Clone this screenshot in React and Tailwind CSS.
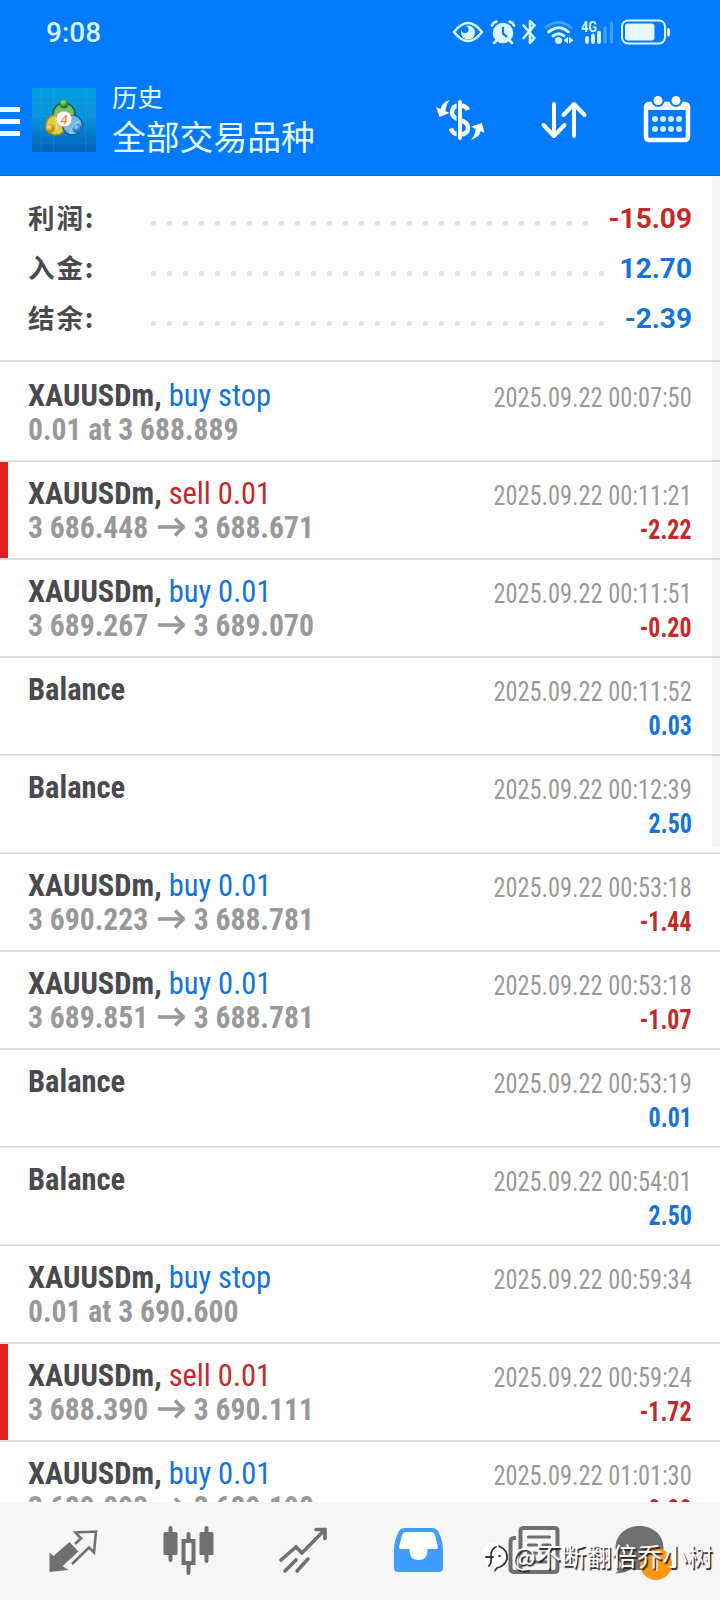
const cyan = '#d8f6ff'

function StatusBar() {
  return (
    <div className="flex h-[64px] items-center justify-between pl-[46px] pr-[50px] text-[#d8f6ff]">
      <span className="pt-[2px] font-['Roboto'] text-[28px] font-medium leading-[66px]">9:08</span>
      <svg width="220" height="28" viewBox="450 18 220 28" fill="none" stroke={cyan}>
        <path d="M454 32 Q468 14 482 32 Q468 50 454 32Z" strokeWidth="2.6" strokeLinejoin="round" />
        <circle cx="468" cy="32.500" r="7" fill={cyan} stroke="none" />
        <circle cx="465" cy="29.500" r="3.600" fill="#007aff" stroke="none" />
        <circle cx="503" cy="33" r="10.300" fill={cyan} stroke="none" />
        <path d="M503 27v6.500l4 3.500" stroke="#007aff" strokeWidth="2.200" />
        <path d="M492 25.500q1-3 4.500-4M514 25.500q-1-3-4.500-4M496 41l-2 2M510 41l2 2" strokeWidth="2.600" strokeLinecap="round" />
        <path d="M523.500 25.500l11 12.500-4.500 5V21l4.500 4.500-11 12.500" strokeWidth="2.600" strokeLinejoin="round" strokeLinecap="round" />
        <path d="M545 28q13.500-11 27 0" strokeWidth="2.800" opacity=".3" />
        <path d="M548.500 32q10.500-8.500 20 0M553 36q6-4.500 11 0" strokeWidth="3" strokeLinecap="round" />
        <circle cx="558.500" cy="40.500" r="3.500" fill={cyan} stroke="none" />
        <path d="M563.500 40.300l4.500-3.500v7zM573.500 40.300l-4.500-3.500v7z" fill={cyan} stroke="none" />
        <text x="581" y="31.500" fontSize="14.500" fontWeight="700" fontFamily="Roboto" fill={cyan} stroke="none" textLength="16" lengthAdjust="spacingAndGlyphs">4G</text>
        <path d="M587 38v4M593 35.500v6.500M599 32.500v9.500" strokeWidth="3.800" strokeLinecap="round" />
        <path d="M605 28v14M611.500 23v19" strokeWidth="3.400" strokeLinecap="round" opacity=".3" />
        <rect x="622" y="20.500" width="43" height="23" rx="6" strokeWidth="2" />
        <rect x="625" y="23.500" width="29.500" height="17" rx="3" fill="#e9f6fe" stroke="none" />
        <path d="M668.500 29.500v5.500" strokeWidth="3" strokeLinecap="round" />
      </svg>
    </div>
  )
}

function AppLogo() {
  return (
    <svg width="64" height="64" viewBox="0 0 64 64">
      <defs>
        <linearGradient id="sky" x1="0" y1="0" x2="0" y2="1">
          <stop offset="0" stopColor="#069fe0" />
          <stop offset=".5" stopColor="#088fdc" />
          <stop offset="1" stopColor="#0062b4" />
        </linearGradient>
        <radialGradient id="green" cx=".4" cy=".3"><stop stopColor="#b5dd80" /><stop offset="1" stopColor="#1e8430" /></radialGradient>
        <radialGradient id="gold" cx=".4" cy=".3"><stop stopColor="#fff27d" /><stop offset="1" stopColor="#b58b10" /></radialGradient>
        <radialGradient id="blue" cx=".4" cy=".3"><stop stopColor="#9cd6f6" /><stop offset="1" stopColor="#2070b8" /></radialGradient>
      </defs>
      <rect width="64" height="64" fill="url(#sky)" />
      <path d="M9 0v64M21.500 0v64M54 0v64M0 15h64M0 28h64M0 55h64" stroke="#5cc8ef" strokeWidth=".6" opacity=".25" />
      <circle cx="32" cy="26" r="11" fill="#78bb62" stroke="#17672c" strokeWidth="1.500" />
      <circle cx="24" cy="37" r="10" fill="#e2cc3f" stroke="#a88c18" strokeWidth="1.500" />
      <circle cx="40.500" cy="37" r="10" fill="#74b8e4" stroke="#155e9b" strokeWidth="1.500" />
      <path d="M24 29q-1 9 3 16M22.500 27q9-5 19 0M38 46q2-9 9-13" stroke="#fff" strokeWidth="1" fill="none" opacity=".5" />
      <circle cx="32" cy="16" r="4.500" fill="url(#green)" />
      <circle cx="18" cy="40.500" r="4.500" fill="url(#gold)" />
      <circle cx="45" cy="40.500" r="4.500" fill="url(#blue)" />
      <circle cx="32" cy="31" r="7.800" fill="#fff" stroke="#c2b49a" strokeWidth=".7" />
      <text x="32" y="35.500" textAnchor="middle" fontFamily="Roboto" fontStyle="italic" fontWeight="500" fontSize="13" fill="#ee8a50">4</text>
    </svg>
  )
}

function Header() {
  return (
    <header className="h-[176px] border-b border-[#1569cc] bg-[#007aff]">
      <StatusBar />
      <div className="flex items-start text-white">
        <div className="mt-[43px] flex w-5 flex-col gap-[7px]">
          <i className="h-[5px] bg-white" />
          <i className="h-[5px] bg-white" />
          <i className="h-[5px] bg-white" />
        </div>
        <div className="ml-3 mt-6">
          <AppLogo />
        </div>
        <div className="ml-4 mt-[17px] flex flex-col font-['Noto_Sans_CJK_SC',sans-serif] text-[#e8faff]">
          <span className="text-[25.500px] leading-[29px]">历史</span>
          <span className="text-[33.800px] leading-[51px]">全部交易品种</span>
        </div>
        <svg className="ml-auto mr-[28px] mt-[30px]" width="258" height="50" viewBox="434 94 258 50" fill="none" stroke="#fff">
          <path d="M468 110q-2-4.500-8-4.500-8 0-8 7 0 5 8 7.500t8 7.500q0 7-8 7-7.500 0-9-6" strokeWidth="4.500" />
          <path d="M457.300 100v39" stroke="#007aff" strokeWidth="1.400" />
          <path d="M460 102v36" strokeWidth="4" strokeLinecap="round" />
          <path d="M450 100q-8 2-9.500 9l-4.500-2 3.500 10 10-4-4-2q0-6 4.500-11zM471 140q9-3 9.500-9l4 2-2.500-10-11 3.500 4.500 2.500q0 6-4.500 11z" fill="#fff" stroke="none" />
          <path d="M554 104v31M543.500 125l10.500 11 10.500-11M574 136v-31M563.500 115l10.500-11 10.500 11" strokeWidth="4" strokeLinecap="round" strokeLinejoin="round" />
          <rect x="646" y="104" width="42" height="36" rx="3" strokeWidth="4.500" />
          <path d="M645 103h44v7h-44z" fill="#fff" stroke="none" />
          <circle cx="658" cy="100.500" r="5.500" fill="#fff" stroke="#007aff" strokeWidth="2" />
          <circle cx="676" cy="100.500" r="5.500" fill="#fff" stroke="#007aff" strokeWidth="2" />
          <path d="M655 119h.01M663 119h.01M671 119h.01M679 119h.01M655 129h.01M663 129h.01M671 129h.01M679 129h.01" stroke="#d2efff" strokeWidth="6" strokeLinecap="round" />
        </svg>
      </div>
    </header>
  )
}

const summary = [
  { label: '利润:', value: '-15.09', color: 'text-[#c62828]', dots: 28 },
  { label: '入金:', value: '12.70', color: 'text-[#1273dc]', dots: 29 },
  { label: '结余:', value: '-2.39', color: 'text-[#1273dc]', dots: 29 },
]

function Summary() {
  return (
    <section className="flex h-[186px] flex-col border-b-2 border-[#e0e0e0] px-7 pt-[17px]">
      {summary.map((s) => (
        <div key={s.label} className="flex h-[50px] items-center">
          <span className="w-[123px] pb-[2px] font-['Noto_Sans_CJK_SC',sans-serif] text-[26.500px] font-bold leading-[48px] tracking-[1.900px] text-[#4a4a4e]">
            {s.label}
          </span>
          <span className="mt-[11px] flex gap-[11px]">
            {Array.from({ length: s.dots }, (_, i) => (
              <i key={i} className="size-[5px] rounded-full bg-[#e2e2e2]" />
            ))}
          </span>
          <span className={`ml-auto pt-[2px] font-['Roboto'] text-[28px] font-bold leading-[48px] ${s.color}`}>{s.value}</span>
        </div>
      ))}
    </section>
  )
}

const history = [
  { side: 'buy stop', text: '0.01 at 3 688.889', time: '00:07:50' },
  { side: 'sell 0.01', from: '3 686.448', to: '3 688.671', time: '00:11:21', profit: '-2.22', marked: true },
  { side: 'buy 0.01', from: '3 689.267', to: '3 689.070', time: '00:11:51', profit: '-0.20' },
  { time: '00:11:52', profit: '0.03' },
  { time: '00:12:39', profit: '2.50' },
  { side: 'buy 0.01', from: '3 690.223', to: '3 688.781', time: '00:53:18', profit: '-1.44' },
  { side: 'buy 0.01', from: '3 689.851', to: '3 688.781', time: '00:53:18', profit: '-1.07' },
  { time: '00:53:19', profit: '0.01' },
  { time: '00:54:01', profit: '2.50' },
  { side: 'buy stop', text: '0.01 at 3 690.600', time: '00:59:34' },
  { side: 'sell 0.01', from: '3 688.390', to: '3 690.111', time: '00:59:24', profit: '-1.72', marked: true },
  { side: 'buy 0.01', from: '3 689.093', to: '3 689.190', time: '01:01:30', profit: '-0.08' },
]

function Arrow() {
  return (
    <svg className="ml-[10px] mr-[9px] inline-block align-[1px]" width="30" height="20" viewBox="0 0 28 20" preserveAspectRatio="none" fill="none" stroke="#999" strokeWidth="3.600">
      <path d="M0 10h26M17.500 1.500L26 10l-8.500 8.500" />
    </svg>
  )
}

function Deal({ deal, first }) {
  const sell = deal.side?.startsWith('sell')
  return (
    <li
      className={`flex shrink-0 flex-col border-b-2 border-[#e0e0e0] px-7 ${first ? 'h-[100px] pt-4' : 'h-[98px] pt-[14px]'} ${
        deal.marked ? 'bg-[linear-gradient(to_right,#e02020_8px,transparent_8px)]' : ''
      }`}
    >
      <div className="flex h-[34px] items-baseline justify-between leading-[34px]">
        <span className="origin-left scale-x-[0.953] whitespace-pre text-[32px] font-bold text-[#4a4a4e]">
          {deal.side ? 'XAUUSDm, ' : 'Balance'}
          <span className={`font-normal ${sell ? 'text-[#c62828]' : 'text-[#1273dc]'}`}>{deal.side}</span>
        </span>
        <span className="origin-right translate-y-px scale-x-[0.902] text-[27px] text-[#999]">2025.09.22 {deal.time}</span>
      </div>
      <div className="flex h-[34px] items-baseline justify-between leading-[34px]">
        <span className="origin-left scale-x-[0.926] text-[32px] font-bold text-[#999]">
          {deal.text || deal.from || '\u00a0'}
          {deal.to && (
            <>
              <Arrow />
              {deal.to}
            </>
          )}
        </span>
        <span
          className={`origin-right translate-y-px scale-x-[0.885] text-[27px] font-bold ${
            deal.profit?.startsWith('-') ? 'text-[#c62828]' : 'text-[#1273dc]'
          }`}
        >
          {deal.profit}
        </span>
      </div>
    </li>
  )
}

function BottomNav() {
  return (
    <nav className="relative h-[98px] shrink-0 bg-[#f6f6f6]">
      <svg width="720" height="98" viewBox="0 1502 720 98" fill="none" stroke="#707070">
        <path d="M49.500 1552.500l4 3.500 16-14 9 9.500-16 14.500 6 4-19 2z" fill="#707070" stroke="none" />
        <path d="M75 1544l6-5.500-5.500-6 20.500-1-2 21-5-5-17 16.500" strokeWidth="2.600" />
        <path d="M170.500 1528v32M188.500 1534v39M206.500 1528v33" strokeWidth="4" strokeLinecap="round" />
        <rect x="163.500" y="1532" width="14" height="23" rx="1.500" fill="#707070" stroke="none" />
        <rect x="199.500" y="1532" width="14" height="23" rx="1.500" fill="#707070" stroke="none" />
        <rect x="183.500" y="1541" width="10" height="22" fill="#f6f6f6" strokeWidth="4" />
        <path d="M281 1560l15-13 6 6 23-23.500M316 1529.500h9v9M285 1571l11-11M297 1571l11-12" strokeWidth="3.600" strokeLinecap="round" />

        <path d="M405 1528h27q5 0 7 5 4 9 4 16v19q0 4-4 4h-41q-4 0-4-4v-19q0-7 4-16 2-5 7-5z" fill="#419cff" stroke="none" />
        <path d="M406 1532h25q3 0 4 3l3 12q0 2-2 2h-8.500v1q0 10-9 10t-9-10v-1H401q-2 0-2-2l3-12q1-3 4-3z" fill="#fff" stroke="none" />

        <path d="M516 1538h-2q-3.500 0-3.500 4v26q0 4 4 4h40q3 0 3-3v-38q0-3-3-3h-31q-3 0-3 3v38q0 3-3.500 3" strokeWidth="4" />
        <path d="M528.500 1537h21M528.500 1545h8M543 1545h7M528.500 1553h8M543 1553h7M528.500 1562h21" strokeWidth="3.200" strokeLinecap="round" />

        <path d="M639.500 1526c14 0 24 9.500 24 22s-10 22-24 22q-4.500 0-8-1-6 4-16 4.500 5-4 5.500-10-5.500-6-5.500-15.500c0-12.500 10-22 24-22z" fill="#707070" stroke="none" />
        <circle cx="656" cy="1564" r="16" fill="#fc9716" stroke="none" />
        <text x="656" y="1571" textAnchor="middle" fontFamily="Roboto" fontSize="20" fill="#fff" stroke="none">1</text>

        <circle cx="494" cy="1554" r="11.500" fill="#fff" stroke="none" />
        <path d="M489 1566q3-4 2-9-.5-8 5-10M486 1557h7M499 1546q9 4 8 13-2 7-10 9l-2 2.500M499 1556h1" stroke="#333" strokeWidth="1.800" strokeLinecap="round" />
      </svg>
      <span className="absolute left-[512px] top-[34px] whitespace-nowrap font-['Noto_Sans_CJK_SC',sans-serif] text-[25px] leading-[38px] tracking-[0.300px] text-white [text-shadow:1.500px_1.500px_1px_#222]">
        @不断翻倍乔小树
      </span>
    </nav>
  )
}

export default function App() {
  return (
    <div className="flex h-[1600px] w-[720px] flex-col overflow-hidden bg-white">
      <Header />
      <main className="relative h-[1326px] shrink-0 overflow-hidden">
        <Summary />
        <ul className="flex flex-col font-['Roboto_Condensed','Roboto',sans-serif] font-stretch-condensed">
          {history.map((deal, i) => (
            <Deal key={i} deal={deal} first={i === 0} />
          ))}
        </ul>
        <div className="absolute right-0 top-0 h-[670px] w-2 bg-black/4" />
      </main>
      <BottomNav />
    </div>
  )
}
